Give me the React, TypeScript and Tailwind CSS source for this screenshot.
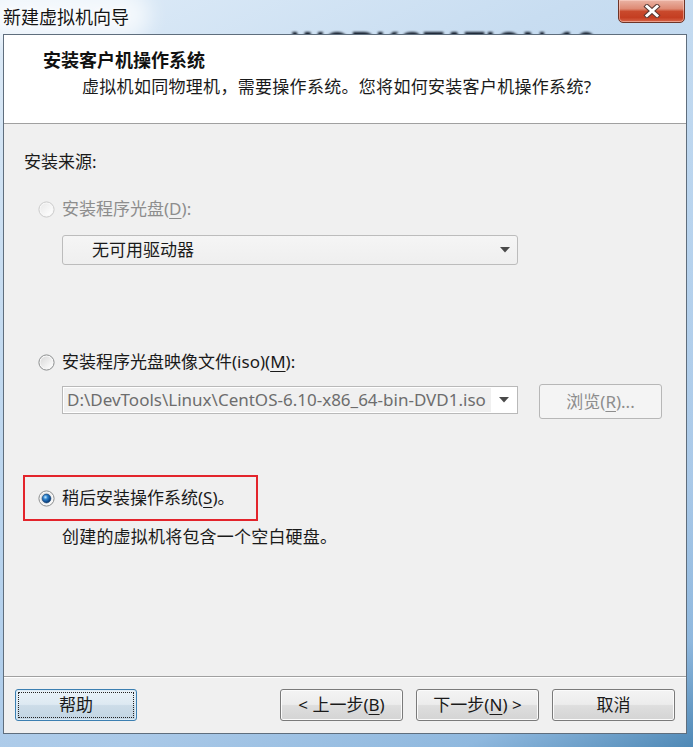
import React from "react";

const FONT = "font-['Noto_Sans','Noto_Sans_CJK_SC',sans-serif]";

function Radio({ checked, disabled }: { checked?: boolean; disabled?: boolean }) {
  const id = checked ? "c" : disabled ? "d" : "n";
  return (
    <svg width="17" height="17" viewBox="0 0 17 17" className="shrink-0">
      <defs>
        <linearGradient id={`rf-${id}`} x1="0" y1="0" x2="1" y2="1">
          <stop offset="0%" stopColor={disabled ? "#e9e9e9" : "#d8d8d8"} />
          <stop offset="100%" stopColor="#ffffff" />
        </linearGradient>
        <radialGradient id={`rd-${id}`} cx="0.38" cy="0.35" r="0.7">
          <stop offset="0%" stopColor="#cdeeff" />
          <stop offset="35%" stopColor="#2f84cf" />
          <stop offset="80%" stopColor="#0c4687" />
          <stop offset="100%" stopColor="#08305b" />
        </radialGradient>
      </defs>
      <circle cx="8.5" cy="8.5" r="7.6" fill="#f6f6f6" stroke={disabled ? "#cbcbcb" : "#8c8e8f"} strokeWidth="1" />
      <circle cx="8.5" cy="8.5" r="6" fill={`url(#rf-${id})`} />
      {checked && <circle cx="8.5" cy="8.5" r="4.4" fill={`url(#rd-${id})`} stroke="#1b4878" strokeWidth="0.7" />}
    </svg>
  );
}

function Arrow() {
  return (
    <svg width="10" height="6" viewBox="0 0 10 6" className="shrink-0">
      <path d="M0 0 H10 L5 5.5 Z" fill="#4a4a4a" />
    </svg>
  );
}

function Btn({ children, focused }: { children: React.ReactNode; focused?: boolean }) {
  return (
    <div
      className={
        focused
          ? "relative flex h-[32px] w-[122px] items-center justify-center rounded-[3px] border border-[#3c7fb1] bg-[linear-gradient(to_bottom,#eaf2f8_0%,#dde9f2_48%,#ccdce8_52%,#c2d5e3_100%)] text-[17px] leading-[24px] text-[#1a1a1a] shadow-[inset_0_0_0_1px_#dbeaf5]"
          : "relative flex h-[32px] w-[123px] items-center justify-center rounded-[3px] border border-[#7a7a7a] bg-[linear-gradient(to_bottom,#f4f4f4_0%,#ececec_48%,#dedede_52%,#d4d4d4_100%)] text-[17px] leading-[24px] text-[#1a1a1a] shadow-[inset_0_0_0_1px_#fbfbfb]"
      }
    >
      {focused && <div className="absolute inset-[2px] border border-dotted border-[#222]" />}
      <span className="relative">{children}</span>
    </div>
  );
}

export default function App() {
  return (
    <div
      className={`${FONT} relative h-[747px] w-[693px] overflow-hidden bg-[linear-gradient(155deg,#dfecf8_0%,#c8ddf1_25%,#b9d4ee_50%,#aac9e8_75%,#8fb8de_90%,#4f89b6_100%)]`}
    >
      {/* title glow */}
      <div className="absolute left-[-20px] top-[-10px] h-[50px] w-[170px] rounded-full bg-white/70 blur-[10px]" />
      {/* watermark */}
      <div className="absolute left-[292px] top-[19px] select-none whitespace-nowrap font-['Liberation_Sans',sans-serif] text-[33px] font-bold tracking-[1px] text-[#111a28] blur-[1px]">
        WORKSTATION 12
      </div>

      {/* title bar */}
      <div className="relative flex h-[34px] items-center pl-[3px] pb-[1px]">
        <span className="text-[18px] leading-[24px] text-[#141414] [text-shadow:0_0_6px_#fff,0_0_10px_#fff]">
          新建虚拟机向导
        </span>
      </div>

      {/* close button */}
      <div className="absolute left-[618px] top-[-1px] flex h-[24px] w-[67px] items-center justify-center rounded-b-[5px] border border-[#6e3427] bg-[linear-gradient(to_bottom,#eab3a4_0%,#de8a74_40%,#c9492c_52%,#c43e22_80%,#d9664a_100%)] shadow-[inset_0_0_0_1px_rgba(255,220,210,0.5)]">
        <svg width="18" height="14" viewBox="0 0 18 14">
          <path d="M4 2.5 L14 11.5 M14 2.5 L4 11.5" stroke="#5a3a35" strokeWidth="5" strokeLinecap="square" />
          <path d="M4 2.5 L14 11.5 M14 2.5 L4 11.5" stroke="#ffffff" strokeWidth="3" strokeLinecap="square" />
        </svg>
      </div>

      {/* client area */}
      <div className="relative z-10 ml-[3px] flex h-[700px] w-[684px] flex-col border border-[#5f6e7d] bg-[#f0f0f0] text-[#1a1a1a]">
        {/* header */}
        <div className="h-[89px] border-b border-[#a0a0a0] bg-white pt-[13px]">
          <div className="pl-[39px] text-[18px] font-bold leading-[24px] text-[#111]">安装客户机操作系统</div>
          <div className="mt-[3px] pl-[78px] text-[17px] leading-[24px] tracking-[0.3px] text-[#1a1a1a]">
            虚拟机如同物理机，需要操作系统。您将如何安装客户机操作系统?
          </div>
        </div>

        {/* body */}
        <div className="flex flex-1 flex-col pl-[20px] pt-[26px] text-[17px] leading-[24px]">
          <div className="h-[24px]">安装来源:</div>

          <div className="mt-[23px] flex h-[24px] items-center">
            <div className="ml-[14px] flex items-center">
              <Radio disabled />
            </div>
            <span className="ml-[7px] text-[#8d8d8d]">
              安装程序光盘(<u className="underline-offset-[3px]">D</u>):
            </span>
          </div>

          <div className="ml-[38px] mt-[14px] flex h-[30px] w-[456px] items-center justify-between rounded-[3px] border border-[#bcbcbc] bg-[linear-gradient(to_bottom,#f5f5f5,#efefef)] pl-[29px] pr-[7px]">
            <span>无可用驱动器</span>
            <Arrow />
          </div>

          <div className="mt-[85px] flex h-[24px] items-center">
            <div className="ml-[14px] flex items-center">
              <Radio />
            </div>
            <span className="ml-[7px]">
              安装程序光盘映像文件(iso)(<u className="underline-offset-[3px]">M</u>):
            </span>
          </div>

          <div className="mt-[10px] flex items-start">
            <div className="ml-[38px] mt-[2px] flex h-[28px] w-[456px] items-stretch border border-[#b9b9b9] bg-white p-[1px]">
              <div className="flex w-[427px] items-center overflow-hidden whitespace-nowrap bg-[#f0f0f0] pl-[3px] text-[#6d6d6d]">
                D:\DevTools\Linux\CentOS-6.10-x86_64-bin-DVD1.iso
              </div>
              <div className="flex flex-1 items-center justify-center">
                <Arrow />
              </div>
            </div>
            <div className="ml-[21px] flex h-[35px] w-[123px] items-center justify-center rounded-[3px] border border-[#b7b7b7] bg-[#f4f4f4] text-[#8d8d8d]">
              浏览(<u className="underline-offset-[3px]">R</u>)...
            </div>
          </div>

          <div className="ml-[-1px] mt-[56px] h-[46px] w-[235px] border-2 border-[#e3242b] pl-[13px] pt-[9px]">
            <div className="flex h-[24px] items-center">
              <Radio checked />
              <span className="ml-[7px]">
                稍后安装操作系统(<u className="underline-offset-[3px]">S</u>)。
              </span>
            </div>
          </div>

          <div className="ml-[38px] mt-[4px] h-[24px] tracking-[0.2px]">创建的虚拟机将包含一个空白硬盘。</div>
        </div>

        {/* footer */}
        <div className="flex h-[57px] items-start border-t border-[#a0a0a0] px-[11px] pt-[12px] shadow-[inset_0_1px_0_#ffffff]">
          <Btn focused>帮助</Btn>
          <div className="ml-auto flex gap-[13px]">
            <Btn>
              &lt; 上一步(<u className="underline-offset-[3px]">B</u>)
            </Btn>
            <Btn>
              下一步(<u className="underline-offset-[3px]">N</u>) &gt;
            </Btn>
            <Btn>取消</Btn>
          </div>
        </div>
      </div>
    </div>
  );
}
